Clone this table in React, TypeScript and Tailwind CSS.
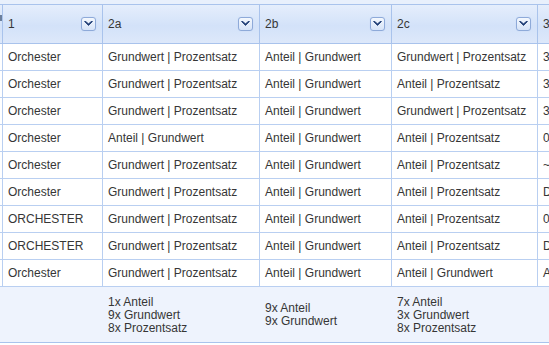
import React from "react";

const COLS = "grid grid-cols-[3px_100px_157px_132px_146px_11px]";

const rows: [string, string, string, string, string][] = [
  ["Orchester", "Grundwert | Prozentsatz", "Anteil | Grundwert", "Grundwert | Prozentsatz", "3"],
  ["Orchester", "Grundwert | Prozentsatz", "Anteil | Grundwert", "Anteil | Prozentsatz", "3"],
  ["Orchester", "Grundwert | Prozentsatz", "Anteil | Grundwert", "Grundwert | Prozentsatz", "3"],
  ["Orchester", "Anteil | Grundwert", "Anteil | Grundwert", "Anteil | Prozentsatz", "0"],
  ["Orchester", "Grundwert | Prozentsatz", "Anteil | Grundwert", "Anteil | Prozentsatz", "~"],
  ["Orchester", "Grundwert | Prozentsatz", "Anteil | Grundwert", "Anteil | Prozentsatz", "D"],
  ["ORCHESTER", "Grundwert | Prozentsatz", "Anteil | Grundwert", "Anteil | Prozentsatz", "0"],
  ["ORCHESTER", "Grundwert | Prozentsatz", "Anteil | Grundwert", "Anteil | Prozentsatz", "D"],
  ["Orchester", "Grundwert | Prozentsatz", "Anteil | Grundwert", "Anteil | Grundwert", "A"],
];

function MenuButton() {
  return (
    <div className="w-[15px] h-[14px] rounded-[3px] border border-[#8eaad9] bg-[linear-gradient(#f4f8fe,#d6e3f8)] flex items-center justify-center shadow-[0_0_1px_#b9cdef]">
      <svg width="9" height="6" viewBox="0 0 9 6">
        <path d="M0.5 0.5 L4.5 4.5 L8.5 0.5 L7 0.5 L4.5 3 L2 0.5 Z" fill="#1d3b73" stroke="#1d3b73" strokeWidth="0.8" strokeLinejoin="round" />
      </svg>
    </div>
  );
}

function HeadCell({ label, last }: { label: string; last?: boolean }) {
  return (
    <div className={`flex items-center justify-between pl-[5px] ${last ? "" : "pr-[6px] border-r border-[#a9c3ec]"}`}>
      <span>{label}</span>
      {!last && <MenuButton />}
    </div>
  );
}

function Cell({ children, last }: { children: React.ReactNode; last?: boolean }) {
  return (
    <div className={`flex items-center pl-[5px] whitespace-nowrap overflow-hidden ${last ? "" : "border-r border-[#b9cff1]"}`}>
      {children}
    </div>
  );
}

function Footer({ lines }: { lines: string[] }) {
  return (
    <div className="flex flex-col justify-center pl-[5px] leading-[13px] pt-[1px]">
      {lines.map((l) => (
        <span key={l}>{l}</span>
      ))}
    </div>
  );
}

export default function App() {
  return (
    <div className="w-[549px] h-[345px] bg-white overflow-hidden text-[12px] text-[#363636] font-['Liberation_Sans',Arial,sans-serif]">
      <div className="pt-[4px] bg-[#e8f0fc]">
        <div className={`${COLS} h-[40px] border-y border-[#a9c3ec] bg-[linear-gradient(#e5eefc,#d3e2f9_55%,#dde8fa)]`}>
          <div className="border-r border-[#a9c3ec] flex items-start pt-[10px]">
            <div className="w-[2px] h-[6px] bg-[#6b7f9c]" />
          </div>
          <HeadCell label="1" />
          <HeadCell label="2a" />
          <HeadCell label="2b" />
          <HeadCell label="2c" />
          <HeadCell label="3" last />
        </div>
      </div>
      {rows.map((r, i) => (
        <div key={i} className={`${COLS} h-[27px] border-b border-[#b9cff1]`}>
          <div className="border-r border-[#b9cff1]" />
          <Cell>{r[0]}</Cell>
          <Cell>{r[1]}</Cell>
          <Cell>{r[2]}</Cell>
          <Cell>{r[3]}</Cell>
          <Cell last>{r[4]}</Cell>
        </div>
      ))}
      <div className={`${COLS} h-[56px] bg-[#eef3fd] border-b border-[#a9c3ec]`}>
        <div />
        <div />
        <Footer lines={["1x Anteil", "9x Grundwert", "8x Prozentsatz"]} />
        <Footer lines={["9x Anteil", "9x Grundwert"]} />
        <Footer lines={["7x Anteil", "3x Grundwert", "8x Prozentsatz"]} />
        <div />
      </div>
    </div>
  );
}
